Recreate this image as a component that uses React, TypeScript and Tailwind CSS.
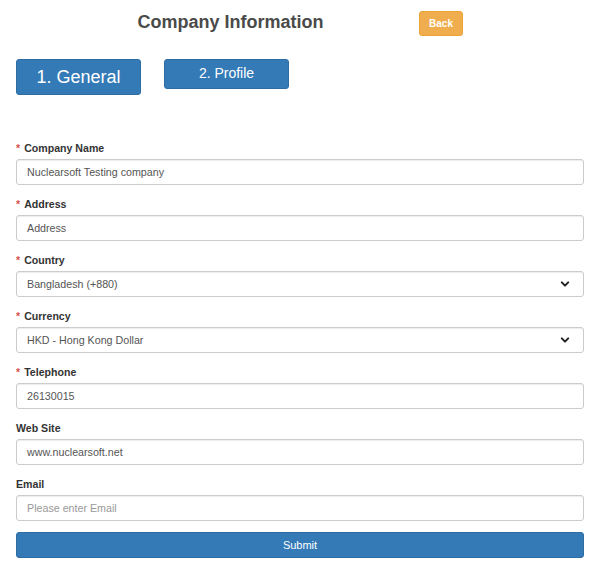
import React from "react";

function Chevron() {
  return (
    <svg width="10" height="10" viewBox="0 0 10 10" className="absolute right-[13px] top-1/2 -translate-y-1/2">
      <path d="M1.8 3.4 L5 6.6 L8.2 3.4" fill="none" stroke="#222" strokeWidth="2" strokeLinecap="round" strokeLinejoin="round" />
    </svg>
  );
}

function Field({ label, required, value, placeholder, select }: { label: string; required?: boolean; value?: string; placeholder?: string; select?: boolean }) {
  return (
    <div className="mb-[11px]">
      <div className="h-[16px] leading-[16px] mb-[3px] text-[10.6px] font-bold text-[#333]">
        {required && <span className="text-[#d9534f] mr-[4px]">*</span>}
        {label}
      </div>
      <div className="relative h-[26px] border border-[#ccc] rounded-[3px] bg-white flex items-center px-[10px] text-[10.7px] shadow-[inset_0_1px_1px_rgba(0,0,0,0.075)]">
        {value ? <span className="text-[#555]">{value}</span> : <span className="text-[#999]">{placeholder}</span>}
        {select && <Chevron />}
      </div>
    </div>
  );
}

export default function App() {
  return (
    <div className="w-[600px] h-[580px] bg-white font-['Liberation_Sans',Arial,sans-serif] px-[16px] pt-[11px] box-border">
      <div className="flex items-start h-[25px]">
        <div className="w-[403px] pl-[26px] text-center text-[18px] font-bold text-[#4a4a4a] leading-[22px]">Company Information</div>
        <button className="w-[44px] h-[25px] rounded-[3px] bg-[#f0ad4e] border border-[#eea236] text-white text-[10px] font-bold">Back</button>
      </div>
      <div className="flex items-start gap-[23px] mt-[23px]">
        <button className="w-[125px] h-[36px] rounded-[3px] bg-[#337ab7] border border-[#2e6da4] text-white text-[18px]">1. General</button>
        <button className="w-[125px] h-[30px] rounded-[3px] bg-[#337ab7] border border-[#2e6da4] text-white text-[14px] pb-[2px]">2. Profile</button>
      </div>
      <div className="mt-[45px]">
        <Field label="Company Name" required value="Nuclearsoft Testing company" />
        <Field label="Address" required value="Address" />
        <Field label="Country" required value="Bangladesh (+880)" select />
        <Field label="Currency" required value="HKD - Hong Kong Dollar" select />
        <Field label="Telephone" required value="26130015" />
        <Field label="Web Site" value="www.nuclearsoft.net" />
        <Field label="Email" placeholder="Please enter Email" />
        <button className="w-full h-[26px] rounded-[3px] bg-[#337ab7] border border-[#2e6da4] text-white text-[11px]">Submit</button>
      </div>
    </div>
  );
}
